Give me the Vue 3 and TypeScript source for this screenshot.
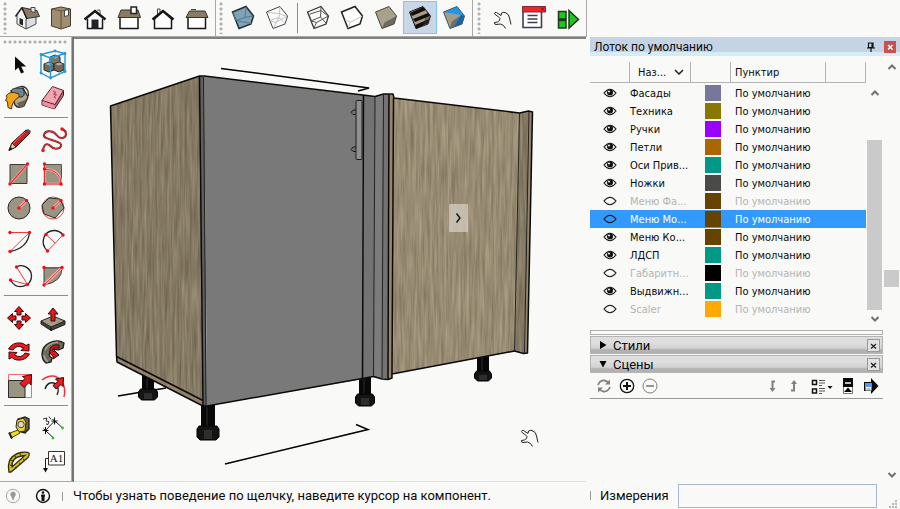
<script setup lang="ts">
import { computed, ref } from 'vue'

interface Tool {
  id: string
  label: string
  art: string
}

interface Layer {
  name: string
  color: string
  visible: boolean
  dash: string
}

const hull = 'M6.5 11L20 5.5 27.5 15 25 23 13 27.5z'
const dot = (x: number, y: number) => `<circle cx="${x}" cy="${y}" r="1.7" fill="#f00f14"/>`
const dots = (...points: [number, number][]) => points.map(([x, y]) => dot(x, y)).join('')
const handPath =
  'M10.5 12.5Q10.5 11 12.5 11.5L17 14.5 17.5 12Q20 10.5 22 12 25 13 25.5 17L27 23.5M10.5 12.5Q11 14 13.5 15L16 17.5Q16 20 13.5 21L10.5 21.5Q10 23.5 12 23.5L16.5 23 19.5 24.5 21.5 27.5'

const views: Tool[] = [
  {
    id: 'iso',
    label: 'Изометрия',
    art: `<path d="M7 14v9l9 5V17L12 8z" fill="#f2f2f2"/><path d="M16 17v11l10-5v-9z" fill="#dedee2"/><path d="M7 14v9l9 5 10-5v-8M16 18v10" fill="none" stroke="#444"/><path d="M12 6.5L27 9.5l2.5 6-13 2z" fill="#8c7a62" stroke="#333"/><path d="M12 6.5L5.5 15.5M12 7l5 11" stroke="#222" stroke-width="1.5"/><path d="M9.500 17l3.500 1.500v6L9.500 23z" fill="#222"/><path d="M21 6.500h4v5l-4-1z" fill="#e8e8ee" stroke="#444"/>`,
  },
  {
    id: 'top',
    label: 'Сверху',
    art: `<path d="M7.5 8L17 6l9.5 2v17L17 28l-9.5-3z" fill="#a08c6e" stroke="#443d34"/><path d="M17 9v18" stroke="#5c5142"/><path d="M7.5 8l9.5 2 9.5-2" fill="none" stroke="#665a48"/><path d="M20.5 9.5l4-1v6l-4 1z" fill="#fff" stroke="#444"/>`,
  },
  {
    id: 'front',
    label: 'Спереди',
    art: `<path d="M19 9h3v4" fill="none" stroke="#555"/><path d="M9.5 18v9.5h15V18" fill="#fff" stroke="#151515" stroke-width="1.5"/><path d="M6.5 18.5L17 10l10.5 8.5" fill="none" stroke="#151515" stroke-width="2.5"/><path d="M13.5 18.5h7v9h-7z" fill="#20242a"/>`,
  },
  {
    id: 'right',
    label: 'Справа',
    art: `<path d="M8 16h18v11.5H8z" fill="#fff" stroke="#151515" stroke-width="1.5"/><path d="M9 9h17l2.5 7.5H6z" fill="#8c7a62" stroke="#333"/><path d="M19 6h5.5v6.5H19z" fill="#fff" stroke="#222" stroke-width="1.5"/>`,
  },
  {
    id: 'back',
    label: 'Сзади',
    art: `<path d="M11.5 14V8H14v4" fill="#fff" stroke="#444"/><path d="M8.5 18v9.5h17V18L17 10z" fill="#fff" stroke="#151515" stroke-width="1.5"/><path d="M6.5 18.5L17 10l10.5 8.5" fill="none" stroke="#151515" stroke-width="2.5"/>`,
  },
  {
    id: 'left',
    label: 'Слева',
    art: `<path d="M8 16h17.5v11.5H8z" fill="#fff" stroke="#151515" stroke-width="1.5"/><path d="M11 8.5h5" stroke="#444"/><path d="M9.5 10H25l3 6.5H6z" fill="#8c7a62" stroke="#333"/>`,
  },
]

const edgeModes: Tool[] = [
  {
    id: 'xray',
    label: 'Рентген',
    art: `<path d="${hull}" fill="#7ea3b8" stroke="#20303a" stroke-width="1.5"/><path d="M7 11.500l3 8 15.500 3M10 19.500l9-3 1-10.500M19 16.500l8-1.500" fill="none" stroke="#55788c"/>`,
  },
  {
    id: 'back-edges',
    label: 'Невидимые линии',
    art: `<path d="${hull}" fill="#fbfbfb" stroke="#444"/><path d="M7 11.500l12 1 8 3M10 19.500l9-3 6 6M20 6l-1 10.500-6 11M10 19.500l5 2 12-6" fill="none" stroke="#c4c4c4"/>`,
  },
]

const faceModes: Tool[] = [
  {
    id: 'wire',
    label: 'Каркас',
    art: `<path d="${hull}" fill="none" stroke="#333" stroke-width="1.2"/><path d="M10 20l9.500-4L20 6M19.500 16l6 6.500M7 11l3.500 9 5 1.500 12-6.500M15.500 21.500L13 27M9 13l11-3.500 7 5.500" fill="none" stroke="#555"/>`,
  },
  {
    id: 'hidden',
    label: 'Скрытые линии',
    art: `<path d="${hull}" fill="#fff" stroke="#222" stroke-width="1.5"/><path d="M13 27l2.5-6 12-6M10 19l5.5 2" fill="none" stroke="#c8c8c8"/>`,
  },
  {
    id: 'shaded',
    label: 'Тонирование',
    art: `<path d="${hull}" fill="#a9a28b"/><path d="M13 27.5l2.5-6 12-6.5-2.5 8z" fill="#6f6a60"/><path d="${hull}" fill="none" stroke="#4a463e"/>`,
  },
  {
    id: 'textured',
    label: 'Тонирование с текстурами',
    art: `<path d="${hull}" fill="#a79c84" stroke="#17130e"/><path d="M7 12L20 6l3 3-14 6zM10 18l15-6 2 3-15 6zM12 24l14-6-1 4-12 6z" fill="#120e0b"/><path d="M22 17l5.5-2-2.5 8-5 2z" fill="#3a3129" opacity=".5"/>`,
  },
  {
    id: 'mono',
    label: 'Монохромный',
    art: `<path d="${hull}" fill="#1f96f0"/><path d="M6.5 11l17.5 3-9 7-2 6.5z" fill="#a39c89"/><path d="M13 27.5l2-7 10-6.5-3 10z" fill="#736e65"/><path d="M27.5 15L25 23l-8 3 7-12z" fill="#0b67b8"/><path d="${hull}" fill="none" stroke="#4a565e"/>`,
  },
]

const extras: Tool[] = [
  {
    id: 'interact',
    label: 'Взаимодействие',
    art: `<path d="${handPath}" fill="none" stroke="#222"/>`,
  },
  {
    id: 'options',
    label: 'Параметры компонента',
    art: `<path d="M5 6h18.5v20.5H5z" fill="#fff" stroke="#3d3d55" stroke-width="1.6"/><path d="M4.5 5.5h23v5.5h-23z" fill="#f0252d" stroke="#7d2a35"/><path d="M23 6.5l3 3m0-3l-3 3" stroke="#7d1018"/><path d="M9.5 14.5h10M9.5 18h10M9.5 21.5h10" stroke="#3d3d55" stroke-width="1.4"/>`,
  },
  {
    id: 'attributes',
    label: 'Атрибуты компонента',
    art: `<g fill="#1fc81f" stroke="#1d3a1d" stroke-width="1.5"><path d="M6.5 10.5H14V18H6.500zM6.5 19.5H14V27H6.500zM17 9.5l9.5 9L17 27z"/></g>`,
  },
]

const redArrow = (rotate: number) =>
  `<path transform="rotate(${rotate} 17 17)" d="M17 5.5l-4.5 5h2.5v3.5h4v-3.5h2.5z" fill="#f01018" stroke="#350606"/>`

const drawingTools: Tool[][] = [
  [
    {
      id: 'select',
      label: 'Выбор',
      art: `<path d="M13 9.5v14l3.3-3 2.8 6 2.9-1.3-2.8-5.7h5z" fill="#0b0b0b"/>`,
    },
    {
      id: 'component',
      label: 'Создать компонент',
      art: `<g stroke="#2b2925"><path d="M14 10l5-2 5 2v6l-5 2-5-2z" fill="#7d7668"/><path d="M8 17l5-2 5 2v6l-5 2-5-2z" fill="#6f695d"/><path d="M18 17l5-2 5 2v6l-5 2-5-2z" fill="#6f695d"/></g><g fill="#b6ad98"><path d="M15 10l4-1.5 4 1.5-4 1.5zM9 17l4-1.5 4 1.5-4 1.5zM19 17l4-1.5 4 1.5-4 1.5z"/></g><path d="M5 7.5L19 4l10 2.5v18L14.5 31 5 26zM5 7.5l9.5 3.5L29 6.5M14.5 11v20" fill="none" stroke="#2698d8" stroke-width="1.4"/><g fill="#2698d8"><circle cx="5" cy="7.5" r="1.4"/><circle cx="19" cy="4" r="1.4"/><circle cx="29" cy="6.5" r="1.4"/><circle cx="29" cy="24.5" r="1.4"/><circle cx="14.5" cy="31" r="1.4"/><circle cx="5" cy="26" r="1.4"/><circle cx="14.5" cy="11" r="1.4"/></g>`,
    },
    {
      id: 'paint',
      label: 'Заливка',
      art: `<path d="M13 8q9-6 13 2l.5 5" fill="none" stroke="#333" stroke-width="1.3"/><path d="M9 10l12-3 5 9-4 9q-6 3-9-1z" fill="#b3aa92" stroke="#2b2925" stroke-width="1.3"/><path d="M9 10q1-3 7-3t5 1q3 6-1 8-4 1-11-6z" fill="#6f8590" stroke="#2b2925"/><path d="M15 22l8-3 2-3-3 9-5 1z" fill="#6a6453"/><path d="M17 13q-9-4-13 2l1 1.500-1.500 3 2 1 .5 6 3.500 1.500Q10 20 17 16z" fill="#f2a51a" stroke="#4a330b"/>`,
    },
    {
      id: 'eraser',
      label: 'Ластик',
      art: `<path d="M6 19.5l13 4 8.500-14v5l-9 13.5-12.5-4z" fill="#c8687a" stroke="#3d1c22"/><path d="M16.5 5.5l11 4-8.5 14-13-4z" fill="#f4a3b0" stroke="#5a2630"/><path d="M17 10l3 1.5-2.500 1.500 3 1-2.500 2 2 1.500" fill="none" stroke="#8c4552"/><path d="M6.5 20l12 4v4l-12-4z" fill="#ec8fa0"/>`,
    },
  ],
  [
    {
      id: 'line',
      label: 'Линия',
      art: `<path d="M7 27l3-7L24 7l4 3-14 14z" fill="#cc1f22" stroke="#2b0808"/><path d="M11 20.5L23 9" stroke="#f0686a"/><path d="M7 27.5l3-7.5 4 4z" fill="#d9c9a0" stroke="#3b3020"/><path d="M6.5 28l2-4 2 2z" fill="#111"/><path d="M24 7l2-1 3 2-1 2.5z" fill="#555"/>`,
    },
    {
      id: 'freehand',
      label: 'От руки',
      art: `<path d="M7 27.5C8 20 12 20 15 23.5S26 26 25 21.5 6 17 8 11.5 18 8 21 12.5 30 15 30 11 28 7 26 6" fill="none" stroke="#7d1418" stroke-width="2"/><path d="M7 27.5C8 20 12 20 15 23.5S26 26 25 21.5 6 17 8 11.5 18 8 21 12.5 30 15 30 11 28 7 26 6" fill="none" stroke="#e83a3e"/>${dots([7, 27.5], [26, 6])}`,
    },
    {
      id: 'rectangle',
      label: 'Прямоугольник',
      art: `<path d="M8 7.5h17v19H8z" fill="#9a9582" stroke="#3a3a35"/><path d="M8 27L25.5 7" stroke="#f7b5b5" stroke-width="2.5"/><path d="M8 27L25.5 7" stroke="#ee2a30" stroke-width="1.2"/>${dots([8, 27], [25.5, 7])}`,
    },
    {
      id: 'rotated-rectangle',
      label: 'Повёрнутый прямоугольник',
      art: `<path d="M8.5 7.5h17v19h-17z" fill="#9a9582" stroke="#55554e"/><path d="M8.5 7v20H25q0-14-16.5-15" fill="none" stroke="#f7b5b5" stroke-width="2.5"/><path d="M8.5 7v20H25q0-14-16.5-15" fill="none" stroke="#ee2a30"/>${dots([8.5, 7], [8.5, 12], [8.5, 27], [25, 27])}`,
    },
    {
      id: 'circle',
      label: 'Окружность',
      art: `<circle cx="17" cy="17" r="11" fill="#9a9582" stroke="#2b2b28"/><path d="M17 17l7.5-7.5" stroke="#f7b5b5" stroke-width="2.5"/><path d="M17 17l7.5-7.5" stroke="#ee2a30"/>${dots([17, 17], [24.5, 9.5])}`,
    },
    {
      id: 'polygon',
      label: 'Многоугольник',
      art: `<circle cx="17" cy="17" r="11" fill="none" stroke="#e8444a"/><path d="M13 7l11 1 4 9-9 10-11-4-2-9z" fill="#9a9582" stroke="#2b2b28"/><path d="M17 17l8-7.5" stroke="#f7b5b5" stroke-width="2.5"/><path d="M17 17l8-7.5" stroke="#ee2a30"/>${dots([17, 17], [25, 9.5])}`,
    },
    {
      id: 'arc',
      label: 'Дуга',
      art: `<path d="M27.5 7.5Q26 23 8 26.5" fill="none" stroke="#222" stroke-width="1.3"/><path d="M8 7.5h19.5L8 26.5" fill="none" stroke="#f23a44"/>${dots([8, 7.5], [27.5, 7.5], [8, 26.5])}`,
    },
    {
      id: 'two-point-arc',
      label: 'Дуга по двум точкам',
      art: `<path d="M11.5 26C3 18 8 5 19 5.5q5 .5 8 4.5" fill="none" stroke="#222" stroke-width="1.3"/><path d="M10 9.5l9 8.5M11.5 26L27 10" fill="none" stroke="#f23a44"/>${dots([10, 9.5], [27, 10], [11.5, 26])}`,
    },
    {
      id: 'three-point-arc',
      label: 'Дуга по трём точкам',
      art: `<path d="M14.5 8c7-4 15 2 15 9q0 5-4 8.5-11 6-17-4.5" fill="none" stroke="#222" stroke-width="1.3"/><path d="M14.5 8l11 17.5-17-4.5" fill="none" stroke="#f23a44"/>${dots([14.5, 8], [8.5, 21], [25.5, 25.5])}`,
    },
    {
      id: 'pie',
      label: 'Сектор',
      art: `<path d="M8 9h18q0 14-18 17z" fill="#9a9582" stroke="#44443e"/><path d="M8 26L26 8.5" stroke="#f7b5b5" stroke-width="3"/><path d="M8 8.5h18L8 26" fill="none" stroke="#ee2a30"/>${dots([8, 8.5], [26, 8.5], [8, 26])}`,
    },
  ],
  [
    {
      id: 'move',
      label: 'Перемещение',
      art: [0, 90, 180, 270].map(redArrow).join(''),
    },
    {
      id: 'push-pull',
      label: 'Тяни-толкай',
      art: `<path d="M5 20l10 6v3.5L5 23zM15 26l14-6v3.5l-14 6z" fill="#4a463d" stroke="#1d1b17"/><path d="M5 20l12-5 12 5-14 6z" fill="#a19a84" stroke="#2b2925"/><path d="M17 7l-5 6h3v7h4v-7h3z" fill="#e8161c" stroke="#350606"/>`,
    },
    {
      id: 'rotate',
      label: 'Поворот',
      art: `<g fill="#ee1a22" stroke="#3d0808"><path d="M6.5 14q4-7 12.5-6 3 .5 5 2.5l3-1.5v7l-8-.5 2.5-2.5q-7-4-10.5 2z"/><path d="M27.5 19q-4 7-12.500 6-3-.5-5-2.500L7 24v-7l8 .5-2.5 2.5q7 4 10.5-2z"/></g>`,
    },
    {
      id: 'follow-me',
      label: 'Ведение',
      art: `<path d="M28 8q-6-4-14-.5T6 19q0 6 4 9l5-1 1-4q-4-2-2-6t8-2l5-2z" fill="#6f695e" stroke="#1d1b17" stroke-width="1.3"/><path d="M9 15q3-7 13-8M8 20q1 5 4 7" fill="none" stroke="#a7a08c" stroke-width="1.5"/><path d="M23 10q-7-1-9 4-1 5 3 7v3l6-4-5-5v2q-2-1-1-3 2-2 6-1z" fill="#d8161c" stroke="#350606"/>`,
    },
    {
      id: 'scale',
      label: 'Масштаб',
      art: `<path d="M6.5 5.5h23v23h-23z" fill="none" stroke="#f06a70"/><path d="M6.5 11.5h16.5v17H6.5z" fill="#9a9582" stroke="#2b2b28"/><path d="M29.5 5.5l-9 2 2.5 2-5 5 4 4 5-5 2 2.5z" fill="#ee1a22" stroke="#350606"/>`,
    },
    {
      id: 'offset',
      label: 'Смещение',
      art: `<path d="M6 11q12-9 20 2 4 6 2 15" fill="none" stroke="#ee3038" stroke-width="1.4"/><path d="M9 20q3-9 11-5M20 16q4 4 1 10" fill="none" stroke="#222" stroke-width="1.4"/><path d="M27.5 8.5l-8 1.5 2.5 2.5-5 4 3 3.5 5-4.5 2 2z" fill="#ee1a22" stroke="#350606"/>`,
    },
  ],
  [
    {
      id: 'tape',
      label: 'Рулетка',
      art: `<path d="M16 8l7-2 4 2v10l-4 4-7-2z" fill="#6b6548" stroke="#1d1b12" stroke-width="1.3"/><path d="M15 9l6-2 3 4-1 9-6 1-3-5z" fill="#efd128" stroke="#2b260b"/><circle cx="19" cy="13.5" r="3.2" fill="#d6d6d6" stroke="#444"/><path d="M8 22l8-3 2 3-9 5z" fill="#f2dc1e" stroke="#4a420c"/><path d="M7 21.5l3 6" stroke="#222" stroke-width="2"/>`,
    },
    {
      id: 'dimension',
      label: 'Размер',
      art: `<path d="M9.5 19.5l9-9.5M10 20l7 6.5M19 10l7 6.5" stroke="#222" fill="none"/><path d="M6.5 19.5h6M9.5 16v7M7.5 17.5l4 4M15.5 10h6M18.5 6.5v7M16.5 8l4 4" stroke="#111"/><path d="M7 8l4-1-1 3 3 .5-1 3-2-.5M13 5.500l2 3" fill="none" stroke="#333"/><circle cx="17" cy="27" r="1.4" fill="#25c825"/><circle cx="26.5" cy="17" r="1.4" fill="#25c825"/>`,
    },
    {
      id: 'protractor',
      label: 'Транспортир',
      art: `<path fill-rule="evenodd" d="M7 27Q4 11 19 7.5q5-1 8 .5 1 2-1 4.500L9 27zM10 22Q9 13 19 11l4-.5z" fill="#d8c324" stroke="#2f2a0a" stroke-width="1.3"/><path d="M8 20l2 .5M9 15l2 1M13 11l1 2M18 8.5l.5 2M13 22l1.5 1M17 18l1.5 1M21 14l1.5 1" stroke="#2f2a0a"/>`,
    },
    {
      id: 'text',
      label: 'Текст',
      art: `<path d="M12.5 6.5h16v13.5h-16z" fill="#fff" stroke="#333"/><path d="M12.5 13.5H9.5V25" fill="none" stroke="#222"/><path d="M7 23h5l-2.500 4.500z" fill="#111"/><text x="20.5" y="17" text-anchor="middle" font-family="Liberation Serif, serif" font-size="11" fill="#111">A1</text>`,
    },
  ],
]

const layers = ref<Layer[]>([
  { name: 'Фасады', color: '#777799', visible: true, dash: 'По умолчанию' },
  { name: 'Техника', color: '#887700', visible: true, dash: 'По умолчанию' },
  { name: 'Ручки', color: '#9900ff', visible: true, dash: 'По умолчанию' },
  { name: 'Петли', color: '#aa6600', visible: true, dash: 'По умолчанию' },
  { name: 'Оси Прив...', color: '#009988', visible: true, dash: 'По умолчанию' },
  { name: 'Ножки', color: '#4a4a48', visible: true, dash: 'По умолчанию' },
  { name: 'Меню Фа...', color: '#664400', visible: false, dash: 'По умолчанию' },
  { name: 'Меню Мо...', color: '#664400', visible: false, dash: 'По умолчанию' },
  { name: 'Меню Ко...', color: '#664400', visible: true, dash: 'По умолчанию' },
  { name: 'ЛДСП', color: '#009988', visible: true, dash: 'По умолчанию' },
  { name: 'Габаритн...', color: '#000000', visible: false, dash: 'По умолчанию' },
  { name: 'Выдвижн...', color: '#009988', visible: true, dash: 'По умолчанию' },
  { name: 'Scaler', color: '#ffaa00', visible: false, dash: 'По умолчанию' },
])

const selectedLayer = ref(7)
const faceMode = ref('textured')
const stylesOpen = ref(false)
const scenesOpen = ref(true)
const measurement = ref('')

const legs = [
  { x: 148, top: 372, foot: 389, width: 12, footWidth: 19, footHeight: 11 },
  { x: 208, top: 404, foot: 426, width: 14, footWidth: 22, footHeight: 14 },
  { x: 365, top: 376, foot: 394, width: 12, footWidth: 19, footHeight: 12 },
  { x: 483, top: 355, foot: 371, width: 12, footWidth: 17, footHeight: 10 },
]

const legShapes = computed(() =>
  legs.map((leg) => ({
    ...leg,
    nut: `M${leg.x - leg.footWidth / 2 + 2} ${leg.foot}h${leg.footWidth - 4}l2 3v${leg.footHeight - 6}l-3 3h-${leg.footWidth - 6}l-3-3v-${leg.footHeight - 6}z`,
    facets: `M${leg.x - 4} ${leg.foot + 4}h8v${leg.footHeight - 5}h-8z`,
  })),
)
</script>

<template>
  <div class="app">
    <header class="toolbar">
      <div class="group">
        <span class="grip"></span>
        <button v-for="t in views" :key="t.id" class="tool" type="button" :aria-label="t.label">
          <svg viewBox="0 0 34 34" v-html="t.art"></svg>
        </button>
      </div>
      <div class="group">
        <span class="grip"></span>
        <button v-for="t in edgeModes" :key="t.id" class="tool" type="button" :aria-label="t.label">
          <svg viewBox="0 0 34 34" v-html="t.art"></svg>
        </button>
        <span class="divider"></span>
        <button
          v-for="t in faceModes"
          :key="t.id"
          class="tool"
          :class="{ active: faceMode === t.id }"
          type="button"
          :aria-label="t.label"
          @click="faceMode = t.id"
        >
          <svg viewBox="0 0 34 34" v-html="t.art"></svg>
        </button>
      </div>
      <div class="group">
        <span class="grip"></span>
        <button v-for="t in extras" :key="t.id" class="tool" type="button" :aria-label="t.label">
          <svg viewBox="0 0 34 34" v-html="t.art"></svg>
        </button>
      </div>
    </header>

    <main class="workspace">
      <nav class="palette" aria-label="Инструменты">
        <span class="palette-grip"></span>
        <div v-for="(set, i) in drawingTools" :key="i" class="tool-set">
          <button v-for="t in set" :key="t.id" class="tool" type="button" :aria-label="t.label">
            <svg viewBox="0 0 34 34" v-html="t.art"></svg>
          </button>
        </div>
      </nav>

      <section class="viewport" aria-label="Модель">
        <svg class="scene" viewBox="74 39 512 441" preserveAspectRatio="xMinYMin meet">
          <defs>
            <filter id="grain-dark" x="0" y="0" width="100%" height="100%" color-interpolation-filters="sRGB">
              <feTurbulence type="fractalNoise" baseFrequency="0.4 0.025" numOctaves="2" seed="4" />
              <feColorMatrix values="0.24 0 0 0 0.4  0.24 0 0 0 0.355  0.22 0 0 0 0.28  0 0 0 0 1" />
              <feComposite in2="SourceGraphic" operator="in" />
            </filter>
            <filter id="grain-light" x="0" y="0" width="100%" height="100%" color-interpolation-filters="sRGB">
              <feTurbulence type="fractalNoise" baseFrequency="0.36 0.025" numOctaves="2" seed="9" />
              <feColorMatrix values="0.24 0 0 0 0.475  0.24 0 0 0 0.425  0.22 0 0 0 0.34  0 0 0 0 1" />
              <feComposite in2="SourceGraphic" operator="in" />
            </filter>
          </defs>

          <g class="axis">
            <path d="M221 68.5L369 88l-11 3" />
            <path d="M225 464l143-34.5-12-5" />
            <path d="M118 396l48-8" />
          </g>

          <g v-for="leg in legShapes" :key="leg.x">
            <rect :x="leg.x - leg.width / 2" :y="leg.top" :width="leg.width" :height="leg.foot - leg.top + 3" fill="#080808" />
            <path :d="`M${leg.x - 1} ${leg.top}V${leg.foot}`" stroke="#2c2c2c" />
            <path :d="leg.nut" fill="#141414" stroke="#000" />
            <path :d="leg.facets" fill="#2e2e2e" />
          </g>

          <path d="M110.5 106L199.5 76l3.5 330-86-44-.5-6z" filter="url(#grain-dark)" />
          <path d="M116.5 357l86.5 44v5l-86-44z" fill="#a08c70" opacity=".5" />
          <path d="M393.5 98l126 15-5 238.500L392 374z" filter="url(#grain-light)" />
          <path d="M519.5 113l9.5-2 3.5 1-5 241-4 .5-9-2.500z" filter="url(#grain-dark)" />
          <path d="M529 112h3.5l-5 241h-3.5z" fill="#9c8b70" opacity=".6" />
          <path d="M199.500 76h5L207 406h-4z" fill="#606060" />
          <path d="M204 76l159 19-.5 284L207 406z" fill="#797979" />
          <path d="M363 95l12 1.5 8.5-2.500h6l-1.500 285-6-.5-8.500-2-11 2.500z" fill="#737373" />
          <path d="M375 96.5l8.5-2.500-1.500 284.500-8.500-2z" fill="#7c7c7c" />
          <path d="M389 94.5h4.500L392 378l-4 1z" fill="#97866b" />

          <g class="edges">
            <path d="M110.5 106L199.500 76h5L363 95l12 1.500 8.500-2.500h9.500l1 4 125.500 15 9-2 4 1-5 241-4 .5-9-2.500L392 374v4l-4 1.500-6-.5-8.500-2.500L207 406h-4l-86-44-.5-6z" />
            <path d="M199.5 76l3.5 330M116.5 356.5l86.5 44M363.5 95l-1 284M393.5 98L392 374" />
            <path d="M389 94.5L388 379" />
          </g>
          <g class="seams">
            <path d="M203.5 77l2.500 328M375 97l-1.500 279M383.5 94L382 378M519.5 113l-5 238M529 112l-4.500 241" />
          </g>

          <g stroke="#1c1c1c">
            <path d="M357 110h-4l-2 2.5 2 2h4zM357 147h-4l-2 2.5 2 2h4z" fill="#707070" />
            <rect x="356" y="100.5" width="6" height="59" rx="1" fill="#918f90" />
          </g>

          <path transform="translate(511 419)" :d="handPath" fill="none" stroke="#222" />
        </svg>
        <button class="hotspot" type="button" aria-label="Далее">
          <svg viewBox="0 0 19 28"><path d="M7.500 9.500l3.500 4.500-3.500 4.500" fill="none" stroke="#1c1c1c" stroke-width="1.5" /></svg>
        </button>
      </section>

      <aside class="tray">
        <div class="tray-title">
          <h1>Лоток по умолчанию</h1>
          <button class="pin" type="button" aria-label="Закрепить">
            <svg viewBox="0 0 10 10"><path d="M2.5 1h4.5v4.5h-4.5zM6 1v5M1 6h8M5 6v4" fill="none" stroke="#111" stroke-width="1.2" /></svg>
          </button>
          <button class="tray-close" type="button" aria-label="Закрыть">
            <svg viewBox="0 0 12 12"><path d="M4 4l4.5 4.5M8.5 4L4 8.5" stroke="#fff" stroke-width="1.5" /></svg>
          </button>
        </div>

        <div class="tray-body">
          <div class="panels">
            <div class="layer-box">
              <table class="layers">
                <colgroup>
                  <col class="c-eye" /><col class="c-name" /><col class="c-color" /><col class="c-dash" /><col class="c-end" />
                </colgroup>
                <thead>
                  <tr>
                    <th></th>
                    <th>
                      <button class="sort" type="button">
                        Наз...
                        <svg viewBox="0 0 10 6"><path d="M1 1l4 4 4-4" fill="none" stroke="#222" stroke-width="1.5" /></svg>
                      </button>
                    </th>
                    <th></th>
                    <th>Пунктир</th>
                    <th></th>
                  </tr>
                </thead>
                <tbody>
                  <tr
                    v-for="(layer, i) in layers"
                    :key="layer.name"
                    :class="{ off: !layer.visible, selected: selectedLayer === i }"
                    @click="selectedLayer = i"
                  >
                    <td class="eye">
                      <button type="button" :aria-label="'Видимость: ' + layer.name" :aria-pressed="layer.visible" @click.stop="layer.visible = !layer.visible">
                        <svg viewBox="0 0 14 10">
                          <path d="M1 5q6-7.500 12 0-6 7.500-12 0z" fill="none" stroke="#1b1b1b" stroke-width="1.2" />
                          <g v-if="layer.visible">
                            <circle cx="7" cy="4.5" r="3" fill="#111" />
                            <circle cx="6" cy="3.5" r="1" fill="#fff" />
                          </g>
                        </svg>
                      </button>
                    </td>
                    <td class="label">{{ layer.name }}</td>
                    <td><span class="swatch" :style="{ background: layer.color }"></span></td>
                    <td class="label dash">{{ layer.dash }}</td>
                    <td></td>
                  </tr>
                </tbody>
              </table>
              <div class="scroll inner">
                <button type="button" aria-label="Вверх"><svg viewBox="0 0 10 8"><path d="M1.5 6L5 2.500 8.5 6" /></svg></button>
                <span class="thumb"></span>
                <button type="button" aria-label="Вниз"><svg viewBox="0 0 10 8"><path d="M1.5 2L5 5.500 8.5 2" /></svg></button>
              </div>
            </div>

            <div class="splitter"></div>

            <div class="panel-head">
              <button class="fold" type="button" :aria-expanded="stylesOpen" @click="stylesOpen = !stylesOpen">
                <svg viewBox="0 0 8 8"><path d="M1 0l6.5 4L1 8z" /></svg>
                Стили
              </button>
              <button class="panel-close" type="button" aria-label="Закрыть стили">
                <svg viewBox="0 0 11 11"><path d="M3 4l5 4.5M8 4L3 8.5" stroke="#222" stroke-width="1.3" /></svg>
              </button>
            </div>
            <div class="panel-head">
              <button class="fold" type="button" :aria-expanded="scenesOpen" @click="scenesOpen = !scenesOpen">
                <svg viewBox="0 0 8 8"><path d="M.5 1h7L4 7.5z" /></svg>
                Сцены
              </button>
              <button class="panel-close" type="button" aria-label="Закрыть сцены">
                <svg viewBox="0 0 11 11"><path d="M3 4l5 4.5M8 4L3 8.5" stroke="#222" stroke-width="1.3" /></svg>
              </button>
            </div>

            <div v-if="scenesOpen" class="scene-tools">
              <button type="button" aria-label="Обновить">
                <svg viewBox="0 0 16 16"><path d="M2 7q2-5 6.5-4.5Q11 3 12.5 5M14 9q-2 5-6.5 4.5Q5 13 3.5 11" fill="none" stroke="#808080" stroke-width="1.8" /><path d="M14 1.5v5H9zM2 14.5v-5h5z" fill="#808080" /></svg>
              </button>
              <button type="button" aria-label="Добавить сцену">
                <svg viewBox="0 0 16 16"><circle cx="8" cy="8" r="6.7" fill="none" stroke="#111" stroke-width="1.3" /><path d="M4 8h8M8 4v8" stroke="#111" stroke-width="2" /></svg>
              </button>
              <button type="button" aria-label="Удалить сцену">
                <svg viewBox="0 0 16 16"><circle cx="8" cy="8" r="7" fill="none" stroke="#808080" /><path d="M4 8h8" stroke="#808080" stroke-width="1.6" /></svg>
              </button>
              <span class="spacer"></span>
              <button class="reorder" type="button" aria-label="Переместить вниз">
                <svg viewBox="0 0 16 16"><path d="M10 3.5H7.5V11" fill="none" stroke="#808080" stroke-width="2" /><path d="M4.5 10h6l-3 4z" fill="#808080" /></svg>
              </button>
              <button class="reorder" type="button" aria-label="Переместить вверх">
                <svg viewBox="0 0 16 16"><path d="M5 12.5h3V5" fill="none" stroke="#808080" stroke-width="2" /><path d="M5 6h6L8 2z" fill="#808080" /></svg>
              </button>
              <button class="view-menu" type="button" aria-label="Вид">
                <svg viewBox="0 0 22 16"><path d="M1.5 2.5h4v4h-4zM1.5 11h4v4h-4z" fill="none" stroke="#111" stroke-width="1.5" /><path d="M8 2.5h6M8 5h6M8 7.5h3M8 10.500h6M8 13h6M8 15.5h3" stroke="#555" /><path d="M16.5 8h5L19 11z" fill="#111" /></svg>
              </button>
              <button type="button" aria-label="Подробности">
                <svg viewBox="0 0 16 16"><path d="M3.5.5h9v15h-9z" fill="#fff" stroke="#777" /><path d="M3 0h10v9H3z" fill="#080808" /><path d="M5 5h6" stroke="#fff" stroke-width="1.5" /><path d="M4 14h8l-4-4.500z" fill="#080808" /></svg>
              </button>
              <button type="button" aria-label="Меню">
                <svg viewBox="0 0 16 16"><path d="M8 0l7.5 8L8 16v-3H1V4h7z" fill="#0a0a0a" /><path d="M2.5 5h6v7.5h-6z" fill="#fff" /><path d="M2.5 5h6v4h-6z" fill="#5897f0" /><path d="M3.5 11h4" stroke="#777" /></svg>
              </button>
            </div>
          </div>

          <div class="scroll outer">
            <button type="button" aria-label="Вверх"><svg viewBox="0 0 10 8"><path d="M1.5 6L5 2.500 8.5 6" /></svg></button>
            <span class="thumb"></span>
            <button type="button" aria-label="Вниз"><svg viewBox="0 0 10 8"><path d="M1.5 2L5 5.500 8.5 2" /></svg></button>
          </div>
        </div>
      </aside>
    </main>

    <footer class="status">
      <div class="message">
        <button type="button" aria-label="Геопозиция">
          <svg viewBox="0 0 16 16"><circle cx="8" cy="8" r="6.7" fill="none" stroke="#a5a5a5" /><path d="M8 13L6.5 9Q4.5 7.5 5.5 5 8 2 10.5 5q1 2.500-1 4z" fill="#999" /></svg>
        </button>
        <button type="button" aria-label="Сведения">
          <svg viewBox="0 0 16 16"><circle cx="8" cy="8" r="6.5" fill="none" stroke="#111" stroke-width="1.4" /><circle cx="8" cy="4.5" r="1.3" fill="#111" /><path d="M6 6.5h4v2H9.5V13h-3V8.5H6z" fill="#111" /></svg>
        </button>
        <p>Чтобы узнать поведение по щелчку, наведите курсор на компонент.</p>
      </div>
      <div class="measure">
        <label for="measure">Измерения</label>
        <input id="measure" v-model="measurement" type="text" />
        <svg class="resize" viewBox="0 0 9 9"><path d="M7 0h2v2H7zM7 3h2v2H7zM7 6h2v2H7zM4 3h2v2H4zM4 6h2v2H4zM1 6h2v2H1z" fill="#b8b8b8" /></svg>
      </div>
    </footer>
  </div>
</template>

<style>
body {
  background: #f9f9f7;
}
</style>

<style scoped>
.app {
  display: grid;
  grid-template-rows: 37px 1fr 27px;
  min-height: 100vh;
  background: #f9f9f7;
  color: #0a0a0a;
  font-family: Roboto, 'Noto Sans', sans-serif;
  font-size: 13px;
}

button {
  display: block;
  padding: 0;
  border: 0;
  background: none;
  color: inherit;
  font: inherit;
}

svg {
  display: block;
}

.toolbar {
  display: flex;
  justify-self: start;
  border-bottom: 1px solid #a8a8a8;
}

.group {
  display: flex;
  padding-right: 1px;
  border-right: 1px solid #a8a8a8;
}

.group:last-child {
  padding: 0 0 0 1px;
}

.grip {
  width: 10px;
  margin: 2px 0;
  background: radial-gradient(circle at 5px 2px, #b0b0b0 1px, transparent 2px) 0 0 / 10px 5px;
}

.divider {
  width: 1px;
  margin: 3px;
  background: #8c8c8c;
}

.tool {
  width: 34px;
  height: 34px;
}

.toolbar .tool {
  margin-top: 1px;
}

.tool svg {
  width: 34px;
  height: 34px;
}

.tool.active {
  height: 33px;
  background: #c8d7e8;
  box-shadow: inset 0 0 0 1px #86c4ee;
}

.workspace {
  display: grid;
  grid-template-columns: 74px minmax(0, 1fr) 310px;
}

.palette {
  padding-left: 2px;
  border-right: 2px solid #757575;
  border-bottom: 1px solid #a8a8a8;
  box-shadow: inset -1px 0 #b0b0b0;
}

.palette-grip {
  display: block;
  height: 10px;
  margin-right: 4px;
  background: radial-gradient(circle at 3px 5px, #b0b0b0 1px, transparent 2px) 0 0 / 5px 10px;
}

.tool-set {
  display: grid;
  grid-template-columns: 34px 34px;
}

.tool-set + .tool-set::before {
  content: '';
  grid-column: 1 / -1;
  height: 1px;
  margin: 2px 2px 5px;
  background: #8c8c8c;
}

.viewport {
  position: relative;
  margin-right: 4px;
  border-top: 2px solid #808080;
  border-bottom: 1px solid #e0e0de;
}

.scene {
  width: 100%;
}

.axis {
  fill: none;
  stroke: #000;
  stroke-width: 1.5;
}

.edges {
  fill: none;
  stroke: #0a0a0a;
  stroke-width: 1.5;
  stroke-linejoin: round;
}

.seams {
  fill: none;
  stroke: #222;
}

.hotspot {
  position: absolute;
  left: 375px;
  top: 165px;
  width: 19px;
  height: 28px;
  border-radius: 1px;
  background: rgba(226, 222, 212, 0.6);
}

.tray {
  display: flex;
  flex-direction: column;
}

.tray-title {
  display: flex;
  align-items: center;
  height: 19px;
  padding: 0 4px;
  background: linear-gradient(#c4d4e5 80%, #d4edf4 80%);
}

.tray-title h1 {
  flex: 1;
  margin: 0;
  font-size: 12px;
  font-weight: 400;
}

.pin svg {
  width: 10px;
  height: 10px;
}

.tray-close {
  margin-left: 8px;
  background: #c94f50;
}

.tray-close svg {
  width: 12px;
  height: 12px;
}

.tray-body {
  display: flex;
  flex: 1;
}

.panels {
  flex: 1;
  padding-top: 6px;
}

.layer-box {
  display: flex;
  height: 262px;
}

.layers {
  flex: 1;
  align-self: flex-start;
  table-layout: fixed;
  border-collapse: separate;
  border-spacing: 0;
  font-family: 'DejaVu Sans Condensed', 'Noto Sans', sans-serif;
  font-size: 11px;
}

.c-eye,
.c-color,
.c-end {
  width: 40px;
}

.c-name {
  width: 61px;
}

.layers th {
  height: 20px;
  padding: 0 0 0 4px;
  border-right: 1px solid #b4b4b4;
  border-bottom: 1px solid #b4b4b4;
  font-weight: 400;
  text-align: left;
}

.layers td {
  height: 18px;
  padding: 0;
  white-space: nowrap;
}

.layers .label {
  height: 16px;
  padding-top: 2px;
  line-height: 16px;
}

.layers .dash {
  padding-left: 4px;
}

.layers thead::after {
  content: '';
  display: block;
  height: 1px;
}

.sort {
  display: flex;
  align-items: center;
  justify-content: space-between;
  width: 100%;
  padding: 0 6px 0 4px;
}

.sort svg {
  width: 10px;
  height: 6px;
}

.eye button {
  width: 40px;
}

.eye svg {
  width: 14px;
  height: 10px;
  margin: 0 auto;
}

.swatch {
  display: block;
  width: 16px;
  height: 16px;
  margin-left: 14px;
}

.off {
  color: #b4b4b4;
}

.selected {
  background: #3399ff;
  color: #fff;
}

.scroll {
  display: flex;
  flex-direction: column;
  justify-content: space-between;
  align-items: center;
  width: 17px;
}

.scroll svg {
  width: 10px;
  height: 8px;
}

.scroll path {
  fill: none;
  stroke: #707070;
  stroke-width: 2;
}

.thumb {
  width: 15px;
  background: #cacaca;
}

.inner {
  padding: 27px 0 1px;
}

.inner .thumb {
  height: 170px;
  margin: auto 0 5px;
}

.outer {
  padding: 7px 0 3px;
}

.outer .thumb {
  height: 17px;
  margin-top: 15px;
}

.splitter {
  height: 3px;
  margin: 6px 0 1px;
  border: 1px solid #b0b0b0;
}

.panel-head {
  display: flex;
  align-items: center;
  justify-content: space-between;
  height: 18px;
  margin-bottom: 1px;
  padding: 0 2px 0 8px;
  box-sizing: border-box;
  border: 1px solid #b4b4b4;
  background: linear-gradient(#dedede 35%, #d2d2d2 70%, #b2b2b2 80%);
}

.fold {
  display: flex;
  align-items: center;
  gap: 6px;
}

.fold svg {
  width: 8px;
  height: 8px;
}

.panel-close {
  border: 1px solid #999;
  background: #e2e2e2;
}

.panel-close svg {
  width: 11px;
  height: 11px;
}

.scene-tools {
  display: flex;
  align-items: center;
  gap: 7px;
  height: 24px;
  padding: 0 4px 0 6px;
  border-bottom: 1px solid #999;
}

.scene-tools svg {
  height: 16px;
}

.reorder {
  margin-right: -2px;
}

.view-menu {
  margin-left: 4px;
}

.spacer {
  flex: 1;
}

.status {
  display: grid;
  grid-template-columns: minmax(0, 1fr) 310px;
}

.message,
.measure {
  display: flex;
  align-items: center;
}

.message {
  gap: 14px;
  padding-left: 5px;
}

.message svg {
  width: 16px;
  height: 16px;
}

.message p {
  margin: 0 0 0 -3px;
  padding-left: 11px;
  background: linear-gradient(#999, #999) 0 60% / 1px 9px no-repeat;
}

.measure {
  padding-right: 3px;
  background: linear-gradient(#999, #999) 0 50% / 1px 9px no-repeat;
}

.measure label {
  padding: 0 9px 0 10px;
}

.measure input {
  flex: 1;
  min-width: 0;
  height: 24px;
  margin-right: 11px;
  padding: 0 4px;
  box-sizing: border-box;
  border: 1px solid #a8b8d0;
  background: #f9f9f7;
  font: inherit;
}

.resize {
  align-self: flex-end;
  width: 9px;
  height: 9px;
}
</style>
